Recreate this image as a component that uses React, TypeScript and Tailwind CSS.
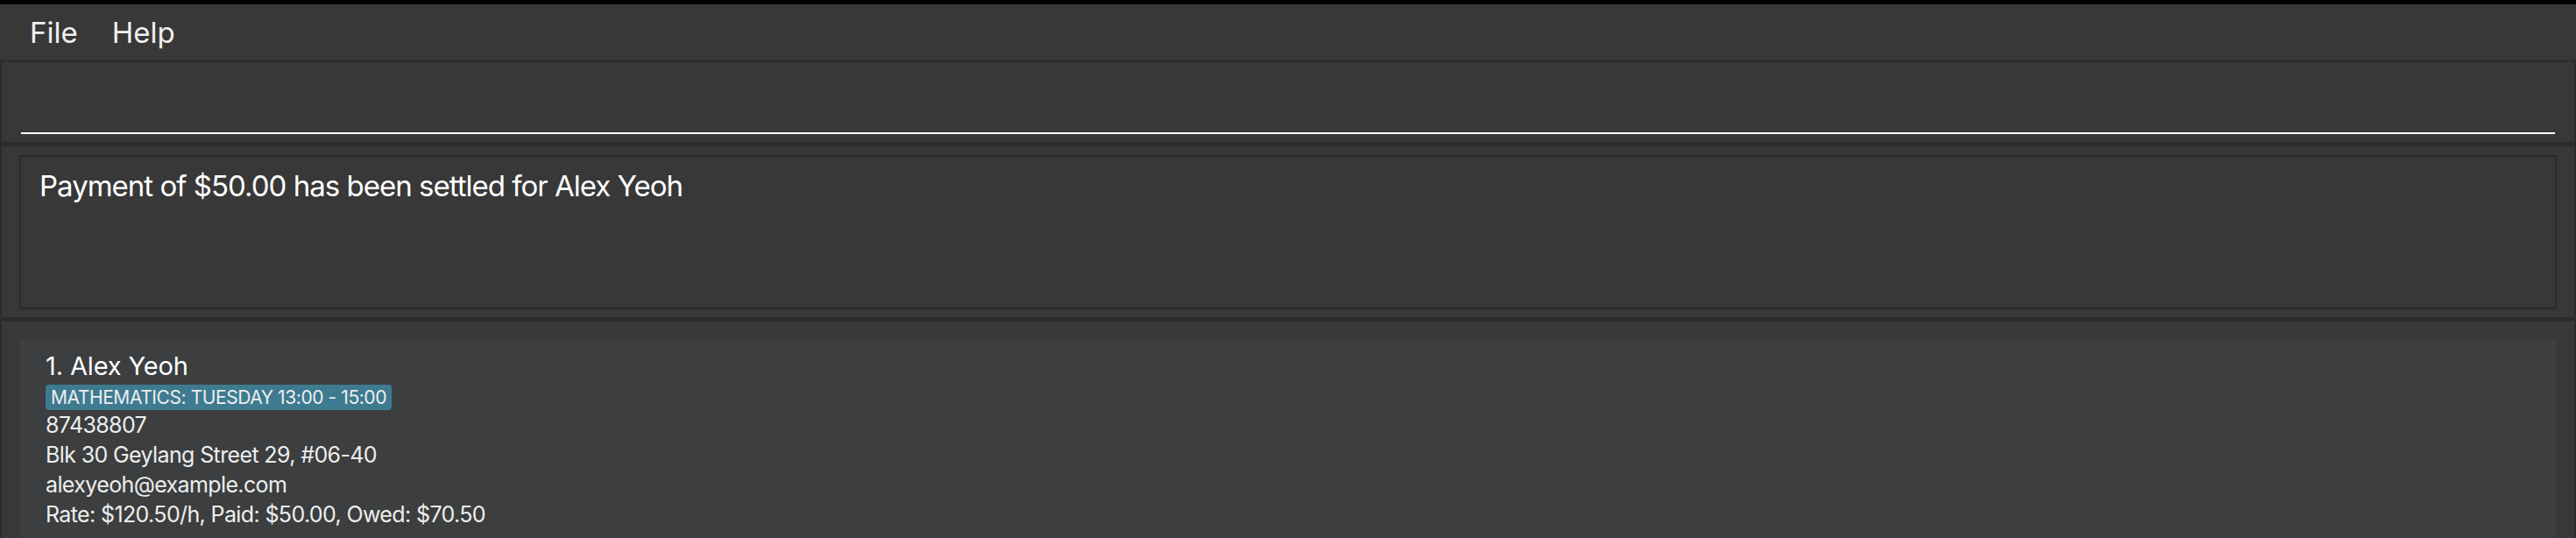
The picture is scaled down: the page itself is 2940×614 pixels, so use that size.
import React from "react";

const FONT = "font-['Inter','Liberation_Sans',sans-serif]";

type Person = {
  name: string;
  tags: string[];
  phone: string;
  address: string;
  email: string;
  rate: string;
};

const PEOPLE: Person[] = [
  {
    name: "Alex Yeoh",
    tags: ["MATHEMATICS: TUESDAY 13:00 - 15:00"],
    phone: "87438807",
    address: "Blk 30 Geylang Street 29, #06-40",
    email: "alexyeoh@example.com",
    rate: "Rate: $120.50/h, Paid: $50.00, Owed: $70.50",
  },
];

function PersonCard({ p, index }: { p: Person; index: number }) {
  return (
    <div className="shrink-0 bg-[#3c3e3f] pt-[13px] pb-[14px] pl-[30px] text-white">
      <div className="text-[29px] leading-[35px] tracking-[-0.005em]">
        {index}. {p.name}
      </div>
      <div className="flex gap-2 mt-[4px]">
        {p.tags.map((t) => (
          <span
            key={t}
            className="bg-[#3e7b91] rounded-[4px] h-[29px] px-[6px] flex items-center text-[21px] tracking-[-0.02em] text-[#eeeeee]"
          >
            {t}
          </span>
        ))}
      </div>
      <div className="text-[25px] leading-[34px] tracking-[-0.025em] text-[#eeeeee]">
        <div>{p.phone}</div>
        <div>{p.address}</div>
        <div>{p.email}</div>
        <div>{p.rate}</div>
      </div>
    </div>
  );
}

export default function App() {
  return (
    <div className={`${FONT} w-[2940px] h-[614px] overflow-hidden bg-[#2b2b2b] flex flex-col`}>
      {/* window top edge */}
      <div className="shrink-0 h-[5px] bg-black" />

      {/* Menu bar */}
      <div className="shrink-0 h-[64px] bg-[#383838] flex items-start pt-[12px] pl-[34px] gap-[39px] text-[33px] leading-[40px] text-[#f0f0f0]">
        <span>File</span>
        <span>Help</span>
      </div>

      <div className="flex-1 min-h-0 flex flex-col gap-[5px] px-[2px] pt-[2px]">
        {/* Command box */}
        <div className="shrink-0 h-[91px] bg-[#383838] px-[22px] flex flex-col justify-end pb-[9px]">
          <div className="h-[2px] bg-white" />
        </div>

        {/* Result display */}
        <div className="shrink-0 h-[195px] bg-[#383838] px-[20px] pt-[10px]">
          <div className="h-[176px] border-2 border-[#2b2b2b] pl-[21px] pt-[13px] text-[33px] leading-[40px] tracking-[-0.03em] text-white">
            Payment of $50.00 has been settled for Alex Yeoh
          </div>
        </div>

        {/* Person list */}
        <div className="flex-1 min-h-0 overflow-hidden flex flex-col bg-[#383838] px-[20px] pt-[20px]">
          {PEOPLE.map((p, i) => (
            <PersonCard key={p.name} p={p} index={i + 1} />
          ))}
        </div>
      </div>
    </div>
  );
}
